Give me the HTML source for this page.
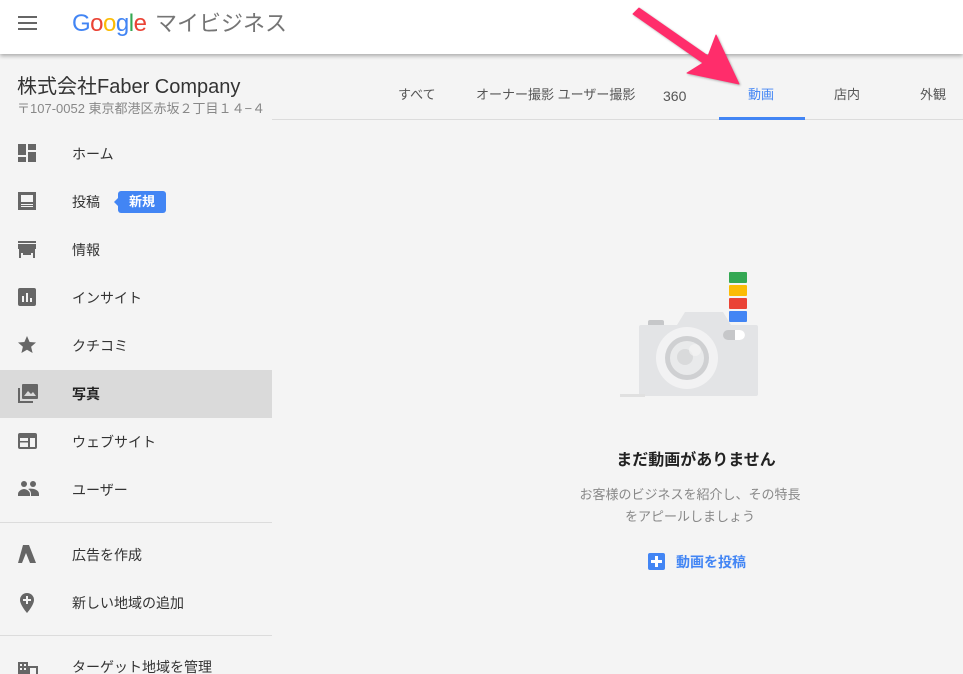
<!DOCTYPE html>
<html><head><meta charset="utf-8"><style>
*{margin:0;padding:0;box-sizing:border-box}
html{width:963px;height:674px;overflow:hidden}
body{width:963px;height:674px;overflow:hidden;background:#f4f4f4;font-family:"Liberation Sans","Noto Sans CJK JP",sans-serif;position:relative;color:#333}
.hdr{position:absolute;left:0;top:0;width:963px;height:54px;background:#fff;box-shadow:0 2px 4px rgba(0,0,0,.3);z-index:2}
.a{position:absolute;white-space:nowrap}
.item{position:absolute;left:0;width:272px;height:48px}
.item .t{position:absolute;left:72px;top:50%;transform:translateY(-50%);font-size:14px;line-height:20px;color:#333}
.item svg{position:absolute;left:18px;top:14px}
.div{position:absolute;left:0;width:272px;height:1px;background:#dcdcdc}
.tab{position:absolute;top:85px;font-size:13px;line-height:20px;color:#555}
</style></head><body>
<div class="hdr">
  <svg class="a" style="left:18px;top:15px" width="20" height="16"><rect y="1" width="19" height="2" fill="#666"/><rect y="7" width="19" height="2" fill="#666"/><rect y="13" width="19" height="2" fill="#666"/></svg>
  <div class="a" style="left:72px;top:9px;font-size:24px;line-height:30px;letter-spacing:-0.5px"><span style="color:#4285f4">G</span><span style="color:#ea4335">o</span><span style="color:#fbbc05">o</span><span style="color:#4285f4">g</span><span style="color:#34a853">l</span><span style="color:#ea4335">e</span></div>
  <div class="a" style="left:155px;top:9px;font-size:22px;line-height:30px;color:#757575">マイビジネス</div>
</div>
<div class="a" style="left:17px;top:74px;font-size:20px;line-height:26px;color:#333">株式会社Faber Company</div>
<div class="a" style="left:17px;top:100px;font-size:13px;line-height:18px;color:#888">〒107-0052 東京都港区赤坂２丁目１４−４</div>

<div class="a" style="left:272px;top:119px;width:691px;height:1px;background:#dcdcdc"></div>
<div class="tab" style="left:398px">すべて</div>
<div class="tab" style="left:476px">オーナー撮影 ユーザー撮影</div>
<div class="tab" style="left:663px;top:86px;font-size:14px">360</div>
<div class="tab" style="left:748px;color:#4285f4">動画</div>
<div class="a" style="left:719px;top:117px;width:86px;height:3px;background:#4285f4"></div>
<div class="tab" style="left:834px">店内</div>
<div class="tab" style="left:920px">外観</div>

<div class="item" style="top:130px"><svg width="20" height="20"><path fill="#666" d="M0 0h8v11H0zM10 0h8v6h-8zM10 8h8v10h-8zM0 13h8v5H0z"/></svg><div class="t">ホーム</div></div>
<div class="item" style="top:178px"><svg width="20" height="20"><rect x="0" y="0" width="18" height="18" fill="#666"/><rect x="3" y="3" width="12" height="7" fill="#f4f4f4"/><rect x="3" y="12" width="12" height="1" fill="#f4f4f4"/><rect x="3" y="14" width="12" height="1" fill="#f4f4f4"/></svg><div class="t">投稿</div>
  <div class="a" style="left:118px;top:13px;width:48px;height:22px;background:#4285f4;border-radius:3px;color:#fff;font-size:13px;font-weight:bold;text-align:center;line-height:22px">新規</div>
  <div class="a" style="left:114px;top:20px;width:0;height:0;border-top:4px solid transparent;border-bottom:4px solid transparent;border-right:4px solid #4285f4"></div></div>
<div class="item" style="top:226px"><svg width="20" height="20"><path fill="#666" d="M0 1h18v2H0zM0 4h18v5H0zM1 9h16v9h-2v-5H3v5H1zM5 13h8v2H5z"/></svg><div class="t">情報</div></div>
<div class="item" style="top:274px"><svg width="20" height="20"><rect width="18" height="18" rx="2" fill="#666"/><rect x="4" y="8" width="2" height="6" fill="#f4f4f4"/><rect x="8" y="5" width="2" height="9" fill="#f4f4f4"/><rect x="12" y="10" width="2" height="4" fill="#f4f4f4"/></svg><div class="t">インサイト</div></div>
<div class="item" style="top:322px"><svg width="20" height="20"><path fill="#666" d="M9 0l2.6 6 6.4.5-4.9 4.2 1.5 6.3L9 13.7 3.4 17l1.5-6.3L0 6.5 6.4 6z"/></svg><div class="t">クチコミ</div></div>
<div class="item" style="top:370px;background:#dadada"><svg width="20" height="20"><path fill="#666" d="M0 4h2v13h13v2H0z"/><rect x="4" y="0" width="16" height="15" rx="1" fill="#666"/><path fill="#dadada" d="M6 12l4-5 3 3 2-2 3 4z"/></svg><div class="t" style="font-weight:bold;color:#222">写真</div></div>
<div class="item" style="top:418px"><svg width="20" height="20"><rect x="0" y="1" width="19" height="16" rx="2" fill="#666"/><rect x="2" y="6" width="15" height="9" fill="#f4f4f4"/><rect x="10" y="6" width="2" height="9" fill="#666"/><rect x="2" y="9" width="8" height="1.5" fill="#666"/></svg><div class="t">ウェブサイト</div></div>
<div class="item" style="top:466px"><svg width="22" height="20"><circle cx="6" cy="4" r="3" fill="#666"/><circle cx="15" cy="4" r="3" fill="#666"/><path fill="#666" d="M0 14c0-3 4-5 6-5s6 2 6 5v2H0zM10 9c3-1 11 0 11 5v2h-8v-2c0-2-1-4-3-5z"/></svg><div class="t">ユーザー</div></div>
<div class="div" style="top:522px"></div>
<div class="item" style="top:531px"><svg width="20" height="20"><path fill="#666" d="M5 0h6l7 18h-6L8 8 4 18H0z"/></svg><div class="t">広告を作成</div></div>
<div class="item" style="top:579px"><svg width="20" height="22"><path fill="#666" d="M9 0a7 7 0 0 1 7 7c0 5-7 13-7 13S2 12 2 7a7 7 0 0 1 7-7z"/><path fill="#f4f4f4" d="M8 3h2v3h3v2h-3v3H8V8H5V6h3z"/></svg><div class="t">新しい地域の追加</div></div>
<div class="div" style="top:635px"></div>
<div class="item" style="top:643px"><svg width="20" height="20"><path fill="#666" d="M0 5h10v15H0zM10 9h10v11H10z"/><g fill="#f4f4f4"><rect x="2" y="7" width="2" height="2"/><rect x="6" y="7" width="2" height="2"/><rect x="2" y="11" width="2" height="2"/><rect x="6" y="11" width="2" height="2"/><rect x="12" y="11" width="6" height="7"/></g></svg><div class="t">ターゲット地域を管理</div></div>

<svg class="a" style="left:615px;top:268px" width="150" height="132">
  <rect x="114" y="4" width="18" height="11" rx="1" fill="#34a853"/>
  <rect x="114" y="17" width="18" height="11" rx="1" fill="#fbbc05"/>
  <rect x="114" y="30" width="18" height="11" rx="1" fill="#ea4335"/>
  <rect x="114" y="43" width="18" height="11" rx="1" fill="#4285f4"/>
  <rect x="33" y="52" width="16" height="7" rx="2" fill="#c6c7c9"/>
  <path d="M62 57l8-13h38l8 13z" fill="#e3e4e6"/>
  <rect x="24" y="57" width="119" height="71" rx="2" fill="#e3e4e6"/>
  <rect x="5" y="126" width="25" height="3" fill="#e0e0e0"/>
  <rect x="108" y="62" width="22" height="10" rx="5" fill="#c6c7c9"/>
  <path d="M120 62h5a5 5 0 0 1 0 10h-5z" fill="#fff"/>
  <circle cx="72" cy="90" r="31" fill="#f2f2f3"/>
  <circle cx="72" cy="90" r="22" fill="#cfd0d2"/>
  <circle cx="72" cy="90" r="17" fill="#e9eaeb"/>
  <circle cx="70" cy="89" r="8" fill="#d9dadb"/>
  <circle cx="80" cy="82" r="6" fill="#f4f4f4" opacity=".7"/>
</svg>

<div class="a" style="left:0;width:1392px;top:450px;text-align:center;font-size:16px;line-height:22px;font-weight:bold;color:#222">まだ動画がありません</div>
<div class="a" style="left:0;width:1380px;top:484px;text-align:center;font-size:13px;line-height:22px;color:#888">お客様のビジネスを紹介し、その特長<br>をアピールしましょう</div>
<div class="a" style="left:648px;top:553px;width:17px;height:17px;background:#4285f4;border-radius:2px"><div class="a" style="left:3px;top:7px;width:11px;height:3px;background:#fff"></div><div class="a" style="left:7px;top:3px;width:3px;height:11px;background:#fff"></div></div>
<div class="a" style="left:676px;top:552px;font-size:14px;line-height:20px;color:#4285f4;font-weight:bold">動画を投稿</div>

<svg class="a" style="left:0;top:0;z-index:3" width="963" height="120">
  <path d="M633 14 L639 8 L708 56 L716 35 L739 84 L687 73 L703 63 Z" fill="#ff2d6b" stroke="#ff2d6b" stroke-width="1" stroke-linejoin="round" style="filter:drop-shadow(1px 1px 1px rgba(0,0,0,.3))"/>
</svg>
</body></html>
